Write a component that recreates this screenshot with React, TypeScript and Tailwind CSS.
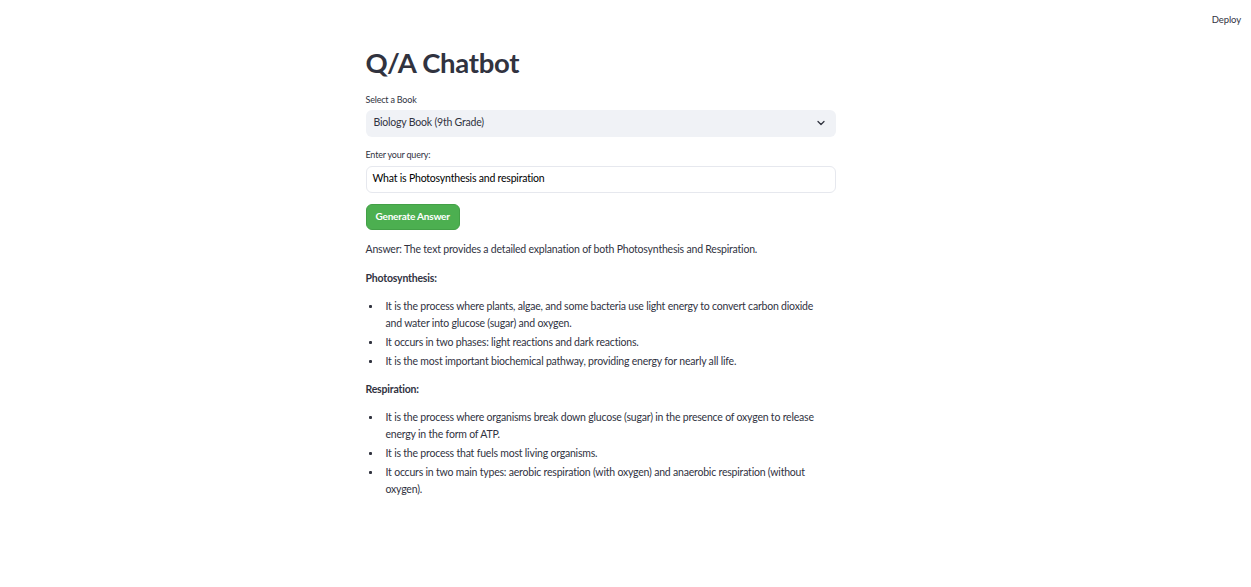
import { ChevronDown } from "lucide-react";

const photo = [
  "It is the process where plants, algae, and some bacteria use light energy to convert carbon dioxide and water into glucose (sugar) and oxygen.",
  "It occurs in two phases: light reactions and dark reactions.",
  "It is the most important biochemical pathway, providing energy for nearly all life.",
];

const resp = [
  "It is the process where organisms break down glucose (sugar) in the presence of oxygen to release energy in the form of ATP.",
  "It is the process that fuels most living organisms.",
  "It occurs in two main types: aerobic respiration (with oxygen) and anaerobic respiration (without oxygen).",
];

const Bullets = ({ items }: { items: string[] }) => (
  <ul className="mt-[11px] flex flex-col gap-[2px] pr-[10px]">
    {items.map((t) => (
      <li key={t} className="flex leading-[17px]">
        <span className="w-[20px] shrink-0 pl-[3px] pt-[7px]">
          <span className="block w-[3px] h-[3px] rounded-[1px] bg-[#31333f]" />
        </span>
        <span>{t}</span>
      </li>
    ))}
  </ul>
);

export default function App() {
  return (
    <div className="min-h-[587px] bg-white text-[#31333f] font-['Lato','Noto_Sans',sans-serif] relative">
      <header className="flex justify-end h-[40px] pt-[13px] pr-[10px]">
        <span className="text-[9.5px] text-[#31333f] tracking-[-0.1px]">Deploy</span>
      </header>

      <main className="w-[470px] mx-auto -translate-x-[25px] text-[10.5px] tracking-[-0.2px]">
        <h1 className="text-[27.5px] font-bold leading-none mt-[9px] tracking-[-0.3px]">Q/A Chatbot</h1>

        <label className="block text-[9px] mt-[18px] leading-none">Select a Book</label>
        <div className="mt-[6px] h-[27px] rounded-[6px] bg-[#f0f2f6] flex items-center justify-between pl-[8px] pr-[9px]">
          <span>Biology Book (9th Grade)</span>
          <ChevronDown size={12} strokeWidth={2.5} />
        </div>

        <label className="block text-[9px] mt-[13px] leading-none">Enter your query:</label>
        <div className="mt-[7px] h-[27px] rounded-[6px] border border-[#e6e8ee] flex items-center pl-[6px] text-black">
          What is Photosynthesis and respiration
        </div>

        <button className="mt-[11px] h-[26px] px-[9px] rounded-[6px] bg-[#4caf50] border border-[#43a047] text-white font-bold text-[10px]">
          Generate Answer
        </button>

        <p className="mt-[11px] leading-[17px]">
          Answer: The text provides a detailed explanation of both Photosynthesis and Respiration.
        </p>

        <p className="mt-[12px] font-bold leading-[17px]">Photosynthesis:</p>
        <Bullets items={photo} />

        <p className="mt-[11px] font-bold leading-[17px]">Respiration:</p>
        <Bullets items={resp} />
      </main>
    </div>
  );
}
